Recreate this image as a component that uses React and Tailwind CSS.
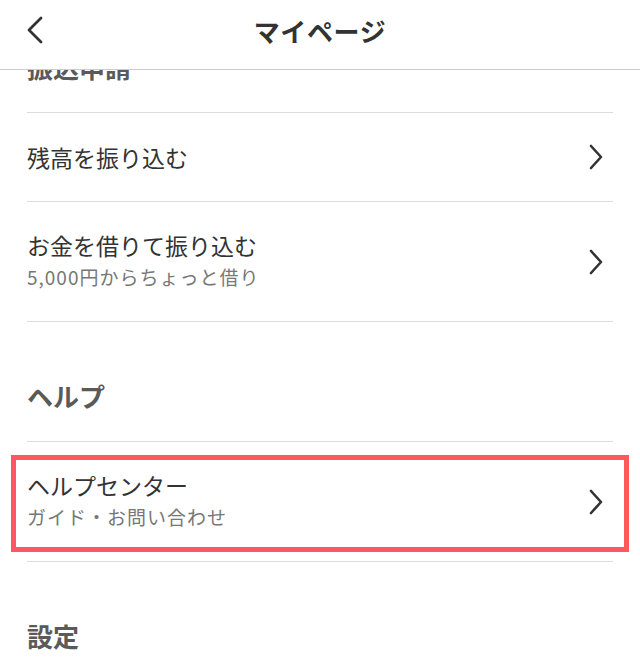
import React from 'react';

const font = { fontFamily: '"Noto Sans CJK JP", "Noto Sans", sans-serif' };

function Chevron({ dir = 'right' }) {
  return dir === 'right' ? (
    <svg width="16" height="26" viewBox="0 0 16 26" fill="none" className="shrink-0">
      <polyline points="3,2 13,13 3,24" stroke="#333" strokeWidth="2.6" strokeLinecap="round" strokeLinejoin="round" />
    </svg>
  ) : (
    <svg width="18" height="28" viewBox="0 0 18 28" fill="none" className="shrink-0">
      <polyline points="15,2 3,14 15,26" stroke="#333" strokeWidth="2.8" strokeLinecap="round" strokeLinejoin="round" />
    </svg>
  );
}

function SectionHeader({ label }) {
  return (
    <div className="h-[120px] border-b border-[#dcdcdc] pt-[51px]">
      <span className="text-[26px] font-bold leading-[46px] text-[#5a5a5a]">{label}</span>
    </div>
  );
}

function Row({ title, sub, highlight }) {
  return (
    <div className={`relative flex items-center justify-between border-b border-[#dcdcdc] pr-[9px] ${sub ? 'h-[120px]' : 'h-[89px]'}`}>
      <div className={`flex flex-col ${sub ? 'pb-[3px]' : ''}`}>
        <span className="text-[23px] leading-[34px] text-[#333]">{title}</span>
        {sub && <span className="text-[19px] leading-[30px] tracking-[1px] text-[#777]">{sub}</span>}
      </div>
      <Chevron />
      {highlight && (
        <div className="absolute -left-[16px] -right-[16px] top-[13px] bottom-[9px] border-[5px] border-[#ff585d]" />
      )}
    </div>
  );
}

export default function App() {
  return (
    <div className="w-[640px] h-[667px] overflow-hidden bg-white flex flex-col" style={font}>
      <div className="relative z-10 h-[70px] shrink-0 bg-white border-b border-[#cccccc] flex items-center justify-center pb-[8px]">
        <div className="absolute left-[26px] top-[16px]">
          <Chevron dir="left" />
        </div>
        <span className="text-[26px] font-bold text-[#333] tracking-wide">マイページ</span>
      </div>
      <div className="flex-1 overflow-hidden">
        <div className="mx-[27px] -mt-[77px]">
          <SectionHeader label="振込申請" />
          <Row title="残高を振り込む" />
          <Row title="お金を借りて振り込む" sub="5,000円からちょっと借り" />
          <SectionHeader label="ヘルプ" />
          <Row title="ヘルプセンター" sub="ガイド・お問い合わせ" highlight />
          <SectionHeader label="設定" />
        </div>
      </div>
    </div>
  );
}
